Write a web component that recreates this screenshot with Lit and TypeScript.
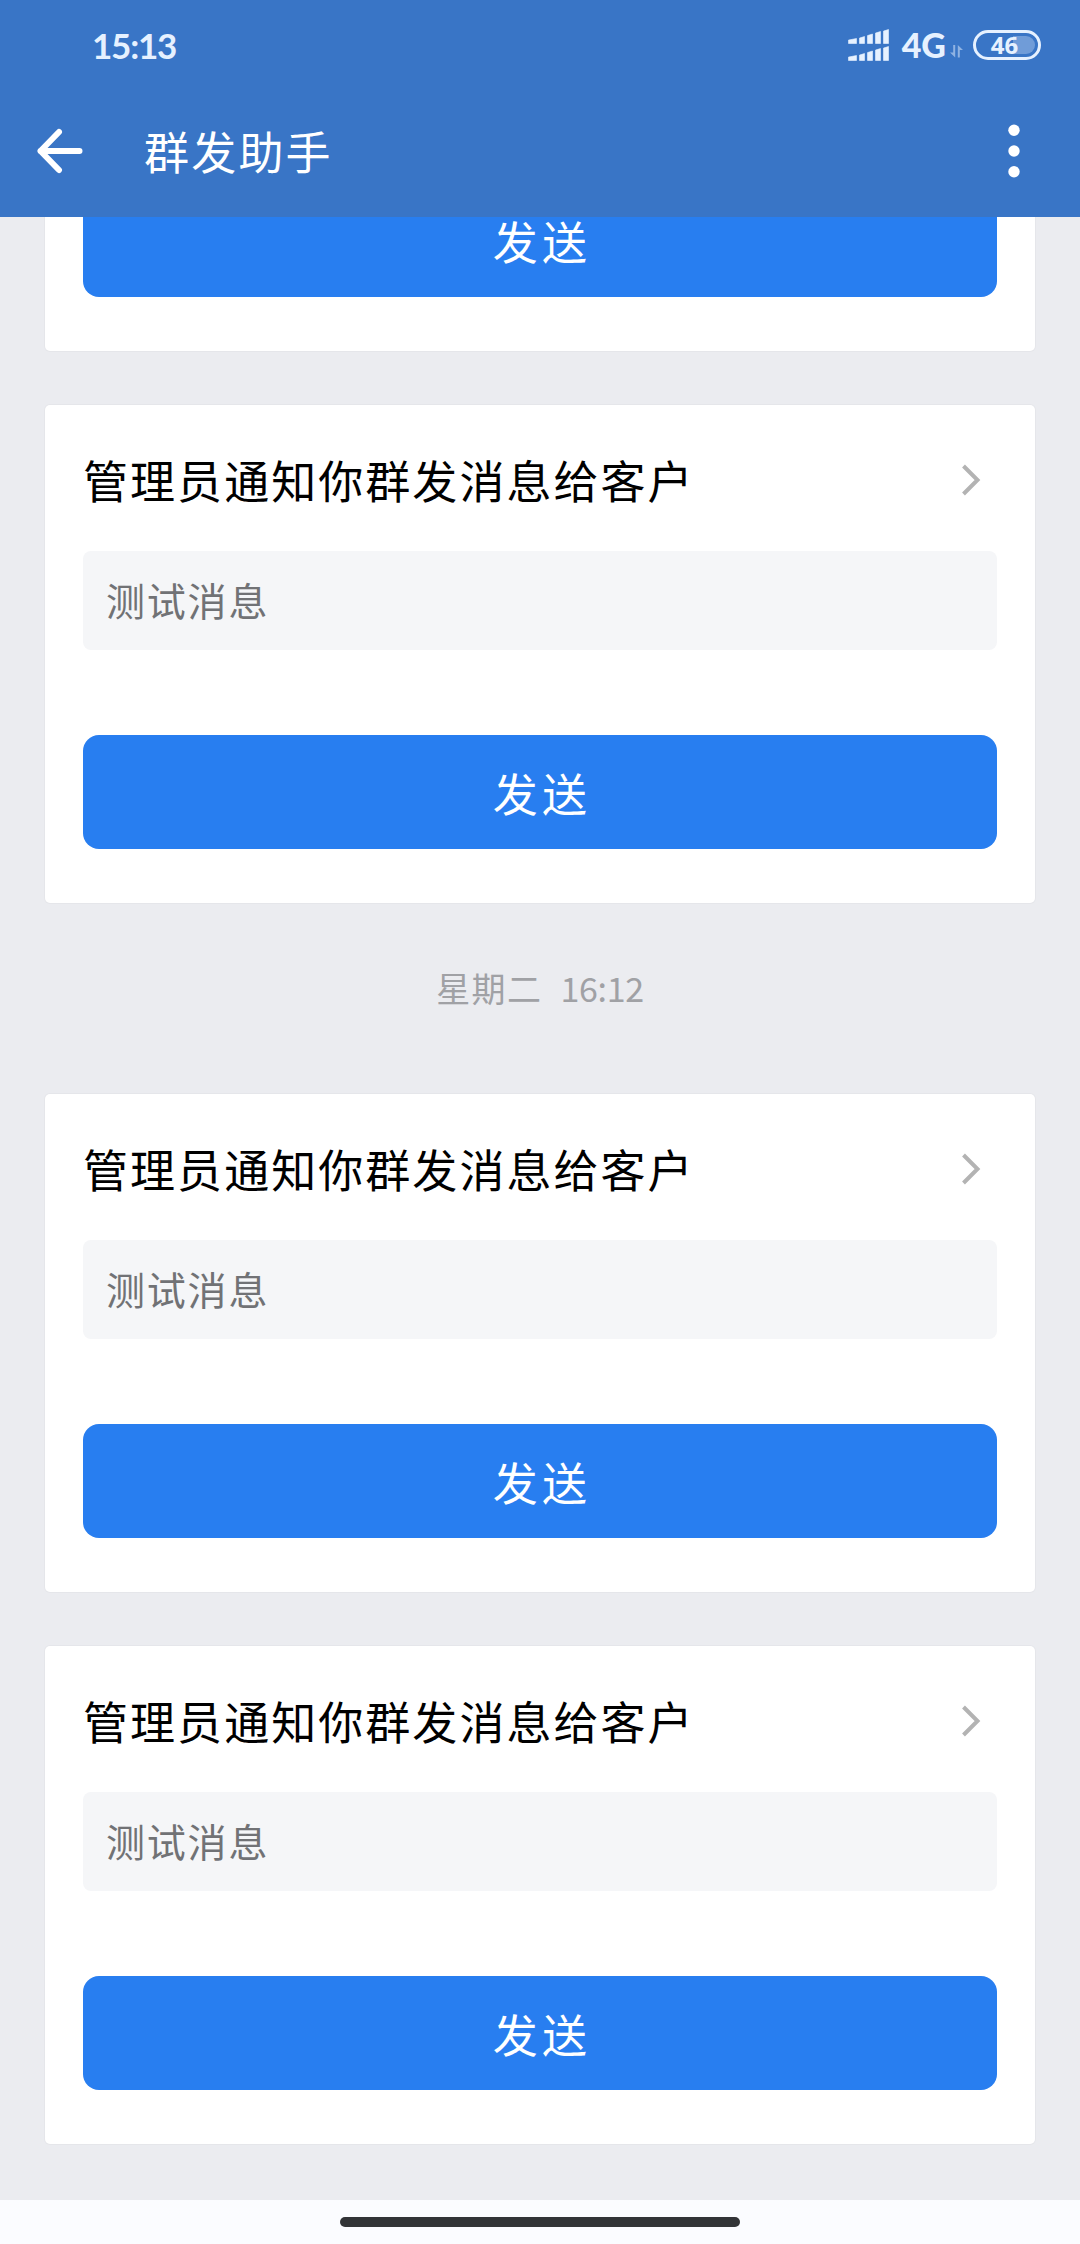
import { LitElement, html, css, svg, nothing } from "lit";
import { customElement, property } from "lit/decorators.js";

const SIGNAL_BARS = [
  { x: 0, w: 8, h: 5 },
  { x: 11, w: 5, h: 7 },
  { x: 19, w: 5, h: 9.5 },
  { x: 27, w: 5, h: 12 },
  { x: 35, w: 5, h: 14 },
];

@customElement("status-bar")
class StatusBar extends LitElement {
  static styles = css`
    :host {
      display: flex;
      justify-content: space-between;
      align-items: center;
      height: 90px;
      padding: 0 39px 0 92px;
      color: #e6f1ff;
      font-family: Lato, "Noto Sans", sans-serif;
      font-weight: 700;
    }
    .clock {
      font-size: 35px;
      line-height: 40px;
      letter-spacing: -1.2px;
    }
    .right {
      display: flex;
      align-items: center;
    }
    .signal,
    .arrows,
    .battery {
      display: block;
    }
    .net {
      margin-left: 13px;
      font-size: 34px;
      line-height: 40px;
      font-weight: 900;
    }
    .arrows {
      margin: 13px 10px 0 4px;
    }
    .battery {
      overflow: visible;
    }
    .level {
      font: 700 24px "Noto Sans", sans-serif;
    }
  `;

  private row(base: number) {
    return SIGNAL_BARS.map(
      (b) => svg`<path d="M${b.x} ${base}V${base - b.h + 1.6}L${b.x + b.w} ${base - b.h}V${base}Z"
        fill="#e6f1ff" stroke="#e6f1ff" stroke-width="0.6" stroke-linejoin="round"/>`
    );
  }

  render() {
    return html`
      <div class="clock">15:13</div>
      <div class="right">
        <svg class="signal" width="41" height="32" viewBox="-0.5 -0.5 41 32">
          ${this.row(14)}${this.row(31)}
        </svg>
        <div class="net">4G</div>
        <svg class="arrows" width="13" height="13" viewBox="0 0 13 13" fill="#e6f1ff" opacity="0.5">
          <path d="M3.2 0H5.2V12.5L0 7.6H3.2Z" />
          <path d="M7.8 0L13 4.9H9.8V12.5H7.8Z" />
        </svg>
        <svg class="battery" width="68" height="30" viewBox="0 0 68 30">
          <path d="M40 6H53A9 9 0 0 1 53 24H40Z" fill="#e6f1ff" opacity="0.32" />
          <rect x="1.5" y="1.5" width="65" height="27" rx="13.5" fill="none" stroke="#e6f1ff" stroke-width="3" />
          <text class="level" x="31.5" y="24" text-anchor="middle" fill="#e6f1ff">46</text>
        </svg>
      </div>
    `;
  }
}

@customElement("title-bar")
class TitleBar extends LitElement {
  static styles = css`
    :host {
      display: flex;
      align-items: center;
      height: 127px;
      padding: 0 60px 5px 37px;
      box-sizing: border-box;
      color: #fff;
    }
    .title {
      flex: 1;
      margin-left: 61px;
      font-size: 45px;
      line-height: 60px;
      letter-spacing: 2.2px;
    }
    .icon {
      display: block;
    }
  `;

  render() {
    return html`
      <svg class="icon" width="46" height="46" viewBox="0 0 46 46" fill="none" stroke="#fff"
        stroke-width="6" stroke-linecap="round" stroke-linejoin="round">
        <path d="M22 4L3.5 23L22 42M3.5 23H42.5" />
      </svg>
      <div class="title">群发助手</div>
      <svg class="icon" width="12" height="54" viewBox="0 0 12 54" fill="#fff">
        <circle cx="6" cy="6.3" r="5.7" />
        <circle cx="6" cy="27" r="5.7" />
        <circle cx="6" cy="47.7" r="5.7" />
      </svg>
    `;
  }
}

@customElement("task-card")
class TaskCard extends LitElement {
  static styles = css`
    :host {
      display: flex;
      flex-direction: column;
      flex: none;
      padding: 0 38px 54px;
      background: #fff;
      border-radius: 5px;
      box-shadow: 0 0 0 1px #e5e6ea;
    }
    .head {
      display: flex;
      align-items: center;
      justify-content: space-between;
      height: 146px;
      padding: 4px 16px 0 0;
      box-sizing: border-box;
      color: #000;
      font-size: 45px;
      line-height: 60px;
      letter-spacing: 2.05px;
    }
    .body {
      height: 99px;
      margin-bottom: 85px;
      padding: 0 23px;
      border-radius: 8px;
      background: #f5f6f8;
      color: #717275;
      font-size: 39px;
      line-height: 97px;
      letter-spacing: 1.8px;
    }
    .send {
      display: block;
      height: 114px;
      padding: 0 0 0 4px;
      border: 0;
      border-radius: 16px;
      background: #287ef0;
      color: #fff;
      font: inherit;
      font-size: 45px;
      letter-spacing: 4.2px;
    }
  `;

  @property() heading = "";
  @property() message = "";

  render() {
    return html`
      ${this.heading
        ? html`
            <div class="head">
              <div>${this.heading}</div>
              <svg width="20" height="34" viewBox="0 0 20 34" fill="none" stroke="#b3b3b3" stroke-width="4">
                <path d="M2.5 3L16.5 17L2.5 31" />
              </svg>
            </div>
            <div class="body">${this.message}</div>
          `
        : nothing}
      <button class="send">发送</button>
    `;
  }
}

@customElement("app-root")
class AppRoot extends LitElement {
  static styles = css`
    :host {
      display: flex;
      flex-direction: column;
      height: 2244px;
      background: #ebecf0;
      font-family: "Noto Sans CJK SC", "Noto Sans", sans-serif;
    }
    .header {
      flex: none;
      height: 217px;
      background: #3975c6;
    }
    .feed {
      flex: 1;
      min-height: 0;
      display: flex;
      flex-direction: column;
      justify-content: flex-end;
      gap: 54px;
      padding: 0 45px 56px;
      overflow: hidden;
    }
    .group {
      display: flex;
      flex-direction: column;
      flex: none;
    }
    .time {
      display: flex;
      align-items: center;
      justify-content: center;
      gap: 18px;
      height: 191px;
      padding-bottom: 22px;
      box-sizing: border-box;
      color: #a0a1a5;
      font-size: 34px;
      letter-spacing: 1.4px;
    }
    .hour {
      letter-spacing: -0.3px;
    }
    .nav {
      flex: none;
      display: flex;
      justify-content: center;
      height: 44px;
      padding-top: 17px;
      box-sizing: border-box;
      background: #fbfcff;
    }
    .pill {
      width: 400px;
      height: 10px;
      border-radius: 5px;
      background: #323437;
    }
  `;

  private card() {
    return html`<task-card heading="管理员通知你群发消息给客户" message="测试消息"></task-card>`;
  }

  render() {
    return html`
      <div class="header">
        <status-bar></status-bar>
        <title-bar></title-bar>
      </div>
      <div class="feed">
        <task-card></task-card>
        <div class="group">
          ${this.card()}
          <div class="time"><span>星期二</span><span class="hour">16:12</span></div>
          ${this.card()}
        </div>
        ${this.card()}
      </div>
      <div class="nav"><div class="pill"></div></div>
    `;
  }
}
